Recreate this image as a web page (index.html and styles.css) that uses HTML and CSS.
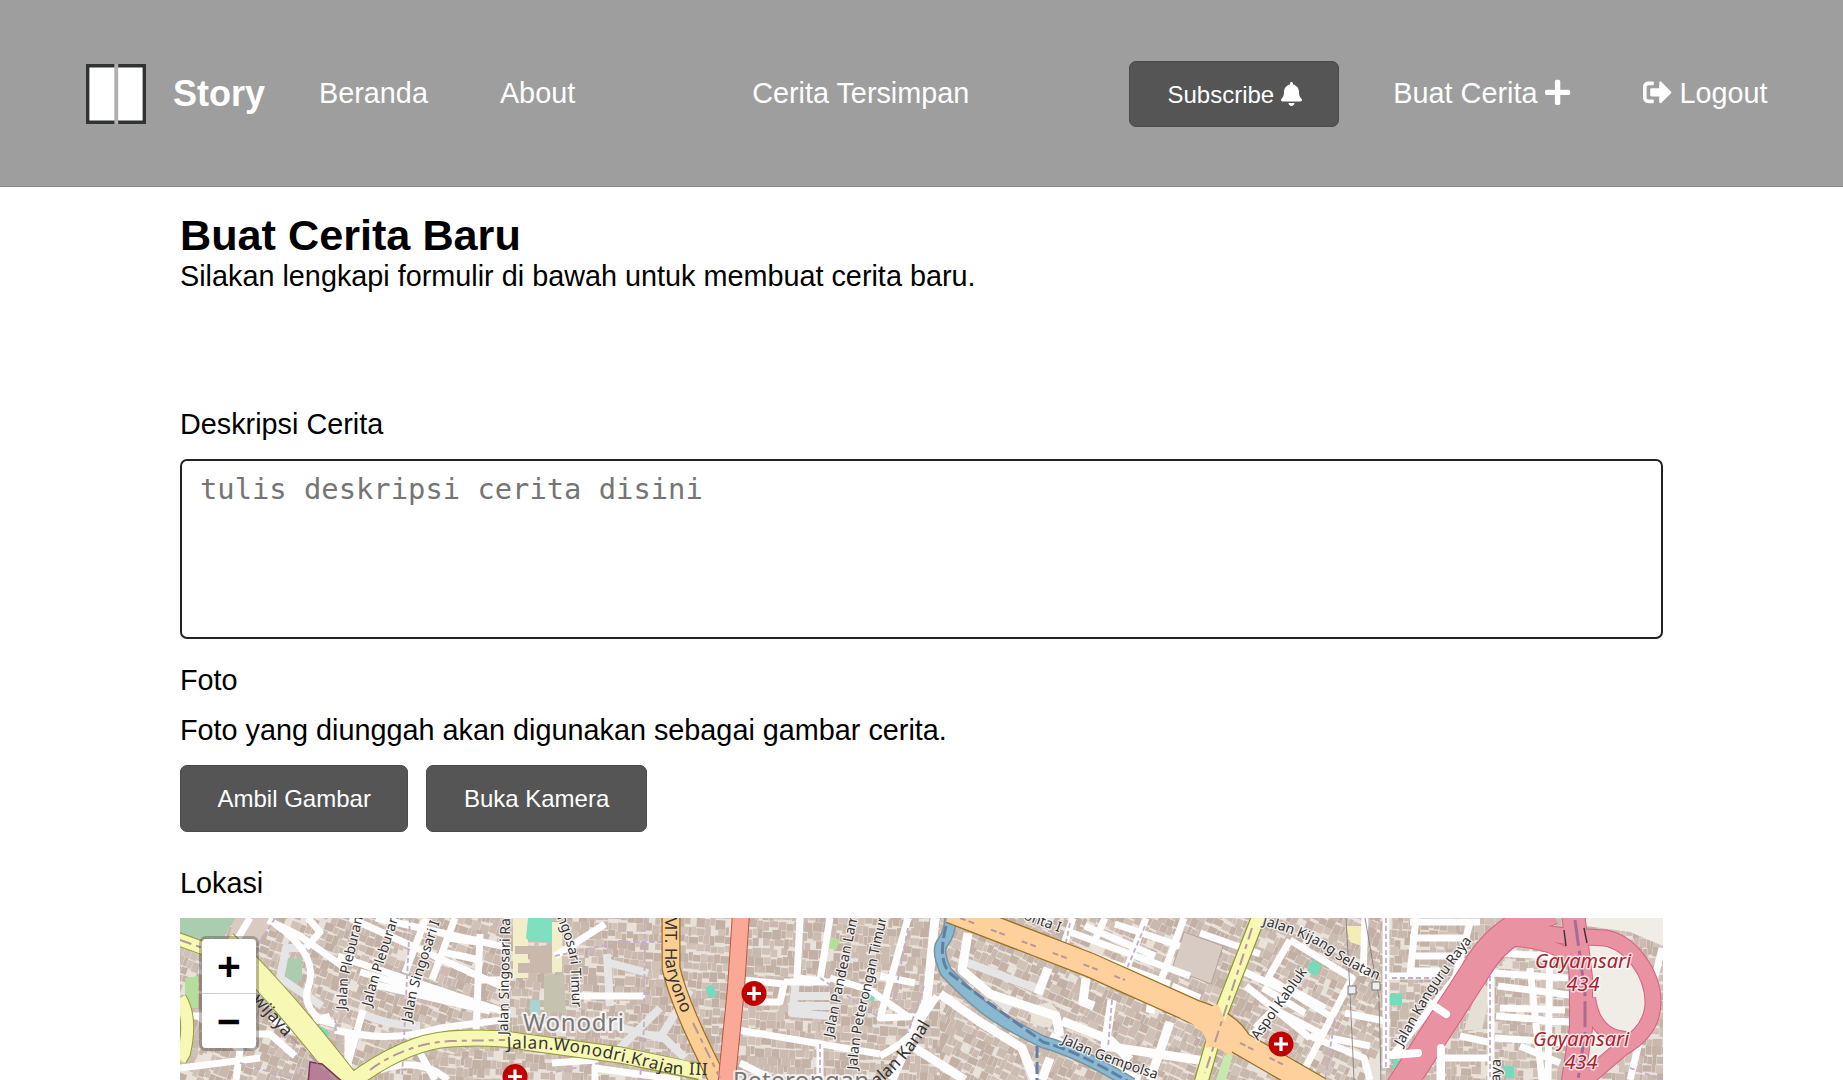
FILE: index.html
```html
<!DOCTYPE html>
<html lang="id">
<head>
<meta charset="utf-8">
<title>Story - Buat Cerita</title>
<link rel="stylesheet" href="styles.css">
</head>
<body>
<header class="header">
  <a class="brand">
    <svg class="brand-logo" viewBox="0 0 60 60">
      <path d="M28.5 1.7H1.7V58.3H28.5M31.5 1.7H58.3V58.3H31.5" fill="#fff" stroke="#303332" stroke-width="3.4"/>
      <path d="M30.500 0V60" stroke="#b0b0b0" stroke-width="3.4"/>
    </svg>
    <span class="brand-name">Story</span>
  </a>
  <nav class="nav">
    <a class="link-home">Beranda</a>
    <a class="link-about">About</a>
    <a class="link-saved">Cerita Tersimpan</a>
  </nav>
  <div class="actions">
    <button class="btn">Subscribe <svg class="icon" viewBox="0 0 448 512"><path d="M224 512c35.32 0 63.97-28.65 63.97-64H160.03c0 35.35 28.65 64 63.97 64zm215.39-149.71c-19.32-20.76-55.47-51.99-55.47-154.29 0-77.7-54.48-139.9-127.94-155.16V32c0-17.67-14.32-32-31.98-32s-31.98 14.33-31.98 32v20.84C118.56 68.1 64.08 130.3 64.08 208c0 102.3-36.15 133.53-55.47 154.29-6 6.45-8.66 14.16-8.61 21.71.11 16.4 12.98 32 32.1 32h383.8c19.12 0 32-15.6 32.1-32 .05-7.55-2.61-15.27-8.61-21.71z"/></svg></button>
    <a class="link-new">Buat Cerita <svg class="icon" viewBox="0 0 448 512"><path d="M416 208H272V64c0-17.67-14.33-32-32-32h-32c-17.67 0-32 14.33-32 32v144H32c-17.67 0-32 14.33-32 32v32c0 17.67 14.33 32 32 32h144v144c0 17.67 14.33 32 32 32h32c17.67 0 32-14.33 32-32V304h144c17.67 0 32-14.33 32-32v-32c0-17.67-14.33-32-32-32z"/></svg></a>
    <a class="link-logout"><svg class="icon" viewBox="0 0 512 512"><path d="M497 273L329 441c-15 15-41 4.5-41-17v-96H152c-13.3 0-24-10.7-24-24v-96c0-13.3 10.7-24 24-24h136V88c0-21.4 25.9-32 41-17l168 168c9.3 9.4 9.3 24.6 0 34zM192 436v-40c0-6.6-5.4-12-12-12H96c-17.7 0-32-14.3-32-32V160c0-17.7 14.3-32 32-32h84c6.6 0 12-5.4 12-12V76c0-6.6-5.4-12-12-12H96c-53 0-96 43-96 96v192c0 53 43 96 96 96h84c6.6 0 12-5.4 12-12z"/></svg> Logout</a>
  </div>
</header>
<main class="content">
  <h1 class="title">Buat Cerita Baru</h1>
  <p class="intro">Silakan lengkapi formulir di bawah untuk membuat cerita baru.</p>
  <form class="form">
    <label class="label" for="description">Deskripsi Cerita</label>
    <textarea class="description" id="description" placeholder="tulis deskripsi cerita disini"></textarea>
    <label class="label label-photo">Foto</label>
    <p class="hint">Foto yang diunggah akan digunakan sebagai gambar cerita.</p>
    <div class="buttons">
      <button type="button" class="btn">Ambil Gambar</button>
      <button type="button" class="btn">Buka Kamera</button>
    </div>
    <label class="label label-location">Lokasi</label>
    <div class="map">
      <svg class="map-canvas" viewBox="0 0 1483 162" width="1483" height="162">
        <defs>
          <clipPath id="west"><path d="M0 0H330V120L180 162H0Z"/></clipPath>
          <clipPath id="mid"><path d="M330 0H760V162H180L330 120Z"/></clipPath>
          <clipPath id="east"><path d="M760 0H1200V162H760Z"/></clipPath>
          <clipPath id="far"><path d="M1200 0H1483V162H1200Z"/></clipPath>
          <path id="t1" d="M166 92L168 62L190 -30"/>
          <path id="t2" d="M191 89L196 70L230 -36"/>
          <path id="t3" d="M231 105L237 74L273 -36"/>
          <path id="t4" d="M328 117L331 -42"/>
          <path id="t5" d="M377 -1Q390 32 391 50L393 120"/>
          <path id="t6" d="M485 -3V42Q488 68 513 120"/>
          <path id="t7" d="M327 131Q368 129 410 137T493 156L550 158"/>
          <path id="t8" d="M653 120L663 70L684 -32"/>
          <path id="t9" d="M677 152Q680 110 690 75L714 -32"/>
          <path id="t10" d="M693 172Q735 140 757 93"/>
          <path id="t11" d="M843 1L895 20"/>
          <path id="t12" d="M881 125Q920 144 1010 172"/>
          <path id="t13" d="M1078 123L1135 43"/>
          <path id="t14" d="M1082 7Q1130 20 1150 36T1215 69"/>
          <path id="t15" d="M1222 129L1255 72L1306 4"/>
          <path id="t16" d="M72 82L130 148"/>
        </defs>
        <rect width="1483" height="162" fill="#e9e2db"/>
        <g clip-path="url(#west)"><g class="lots" data-x="-40" data-y="-100" data-w="430" data-h="330" data-angle="20"></g></g>
        <g clip-path="url(#mid)"><g class="lots" data-x="180" data-y="-30" data-w="620" data-h="230" data-angle="3"></g></g>
        <g clip-path="url(#east)"><g class="lots" data-x="740" data-y="-220" data-w="480" data-h="480" data-angle="24"></g></g>
        <g clip-path="url(#far)"><g class="lots" data-x="1190" data-y="-30" data-w="310" data-h="220" data-angle="2"></g></g>

        <!-- parks, fields and landmark buildings -->
        <g>
          <path d="M0 0H55L43 20H0Z" fill="#aacdb0"/>
          <path d="M55 0H95L75 28L48 20Z" fill="#d9cbc1"/>
          <path d="M106 40H122V60L112 70L104 55Z" fill="#aacdb0"/>
          <path d="M5 60L18 58V90H5Z" fill="#b5dd9c"/>
          <path d="M140 108L150 115L146 120L138 113Z" fill="#74dcba"/>
          <path d="M333 0H348V60H333ZM372 4H382V54H372Z" fill="#f3eeca"/>
          <path d="M348 0H372V24H350L346 20Z" fill="#7fe0bf"/>
          <path d="M364 58L384 56L386 96L364 93Z" fill="#c5c2b0"/>
          <path d="M350 82H360V97H350Z" fill="#aad3d1"/>
          <path d="M335 28H372V55H338V45H350V36H335Z" fill="#cab8ad"/>
          <path d="M525 70L533 66L537 77L529 80Z" fill="#74dcba"/>
          <path d="M649 18L660 22L656 32L648 30Z" fill="#b5dd9c"/>
          <path d="M688 74L696 72L694 83L687 82Z" fill="#74dcba"/>
          <path d="M1004 14L1043 28L1031 66L992 51Z" fill="#d7cbc4" stroke="#b8a49b"/>
          <path d="M1044 138L1054 133L1046 162H1036Z" fill="#c9e8ae"/>
          <path d="M852 88L870 84L880 95L870 110L850 105Z" fill="#e8e2d7"/>
          <path d="M1129 46L1133 42L1142 48L1136 58L1128 54Z" fill="#74dcba"/>
          <path d="M1209 76H1222V87H1209Z" fill="#74dcba"/>
          <path d="M1213 142H1226L1224 152H1213Z" fill="#74dcba"/>
          <path d="M1323 148H1334V160H1326Z" fill="#74dcba"/>
          <path d="M1166 8H1182V28L1170 24Z" fill="#f4eeb4"/>
          <path d="M1300 62L1311 72L1302 112L1284 112Z" fill="#e5e0d5"/>
        </g>

        <!-- side streets -->
        <g class="street street-minor">
          <path d="M126 30H106L100 60L142 88M183 96Q210 108 240 108M427 36L430 88M430 45L468 55M480 90L440 130M420 104L480 120L510 72M482 118L505 140M396 78V60M616 64L612 95L650 98M618 78H650M614 88H650M786 44L860 72M790 60L830 92M800 104L842 130L852 162"/>
        </g>
        <g class="street">
          <path d="M70 0L58 20M95 6Q118 22 126 38T128 70T140 102L155 106M126 30L140 14L128 0M168 118V162M90 100L110 112L150 98M0 98H30M60 116H90L115 138M18 98L60 132L56 162M80 140L0 150"/>
          <path d="M88 2L120 18L165 50M170 0L330 72M196 0L330 30M158 38L330 96M180 54L290 86M192 66L310 93M246 0L225 55M275 0L252 62M300 16L296 115M155 112Q210 126 260 110L330 101M258 108L262 125M183 92L166 152M262 34L300 42M268 20L298 24M296 62H330M240 135L255 162M200 152Q240 138 268 162"/>
          <path d="M375 38L425 6M396 78H465M372 145L415 142V162M415 150L500 162"/>
          <path d="M564 62L604 66L600 84H574M604 64H650M650 60L690 72L730 100M558 112Q630 124 700 136M560 145L590 160M620 0L617 60L645 63M650 0L640 62M728 0L700 100L745 98M700 58L735 65M640 126V162M700 138Q735 120 742 100L757 78"/>
          <path class="street-wide" d="M755 0L747 82L712 162M760 76L800 104L842 130L855 162M788 15L782 52L810 76L876 98L880 118M868 50L858 76M870 118L905 140L960 162M906 60L903 84L914 88M932 82L925 128L1025 143M975 60L970 95M882 103L930 122L950 142M990 104L970 162M735 130L785 162M870 140L862 162"/>
          <path d="M893 0L882 32M925 0L915 22M966 0L945 55M1004 0L980 65M890 14L1010 58M905 8L975 38M880 26L990 66M935 6L1000 28M992 68L1020 80M1020 15L1080 36M1060 52L1110 75L1075 110M1100 85L1068 122M1066 68L1130 120M1110 22L1172 60L1120 160M1110 22L1088 60L1150 98M1092 90L1140 115M1105 68L1145 90M1130 118L1184 140L1190 162M1165 95L1210 104M1150 120L1190 128M1083 70L1125 95"/>
          <path d="M1206 0V150M1206 58H1260M1236 0L1230 56M1230 4H1300M1230 20H1290M1230 38H1278M1230 53H1260M1290 5L1275 60L1212 138M1248 84L1265 96M1210 137L1237 135M1260 132V162M1256 140H1310M1280 118L1308 124M1311 50V162M1314 55L1388 60M1316 35L1370 38M1318 68L1390 77M1316 98L1390 104M1315 120L1395 125M1370 18L1368 162M1350 50L1362 162M1320 90L1385 92M1340 128L1380 145M1440 0L1483 18M1482 30L1450 162M1240 140L1240 162M1185 0L1183 58"/>
        </g>
        <g class="lane"><path d="M155 100L160 162M465 0L464 110L460 162M375 38L440 24H490M890 5L884 34M965 8L945 55M932 82L928 130M744 68L728 115M1206 0V150M1310 50V162M1212 60H1270M1155 100L1145 162M95 0L80 25M230 0L222 160M640 126V162M728 10L714 82M60 145L110 160L140 142M640 60L700 100M1450 150L1483 162M420 145L370 155"/></g>
        <path d="M1166 0Q1170 70 1174 162M1185 0L1199 80L1201 162" fill="none" stroke="#777" stroke-width=".8"/>
        <g fill="#eee" stroke="#777"><path d="M1168 68h8v8h-8zM1192 64h8v8h-8z"/></g>

        <!-- canal -->
        <path d="M771 -4Q770 16 763 24T766 54Q795 84 813 96T863 124Q900 134 952 166" fill="none" stroke="#7b939e" stroke-width="13"/>
        <path d="M771 -4Q770 16 763 24T766 54Q795 84 813 96T863 124Q900 134 952 166" fill="none" stroke="#88b9d0" stroke-width="10"/>
        <path d="M766 8Q757 44 771 56T863 124Q900 134 952 166M857 128V162" fill="none" stroke="#5f7fa6" stroke-width="3" stroke-dasharray="12 4"/>

        <!-- main roads: casing, fill, centre line -->
        <g fill="none" stroke="#939a35">
          <path stroke-width="14" d="M-5 20L45 38M0 80Q12 100 4 135L0 142"/>
          <path stroke-width="24" d="M45 24Q95 70 165 160L175 170"/>
          <path stroke-width="17" d="M170 165Q225 124 270 121T345 124L440 137L520 154"/>
          <path stroke-width="15" d="M1080 -5L1041 95L1020 168"/>
        </g>
        <g fill="none" stroke="#f7f8b4">
          <path stroke-width="12" d="M-5 20L45 38M0 80Q12 100 4 135L0 142"/>
          <path stroke-width="22" d="M45 24Q95 70 165 160L175 170"/>
          <path stroke-width="15" d="M170 165Q225 124 270 121T345 124L440 137L523 154"/>
        </g>
        <path d="M130 144L142 146L165 166H128Z" fill="#b67f98" stroke="#7c3654" stroke-width="1.5"/>
        <path d="M491 -5V50Q500 90 542 170" fill="none" stroke="#9b701e" stroke-width="19"/>
        <path d="M491 -5V50Q500 90 542 170" fill="none" stroke="#fbcf94" stroke-width="16.500"/>
        <path d="M561 -5L556 70L546 170" fill="none" stroke="#bd5444" stroke-width="18"/>
        <path d="M561 -5L556 70L546 170" fill="none" stroke="#f9a996" stroke-width="16"/>
        <path d="M770 -7L910 47L1015 94Q1050 105 1060 125L1140 171" fill="none" stroke="#9b701e" stroke-width="25"/>
        <path d="M770 -7L910 47L1015 94Q1050 105 1060 125L1140 171" fill="none" stroke="#fdd09c" stroke-width="22.500"/>
        <path stroke="#f7f8b4" stroke-width="12.500" fill="none" d="M1080 -5L1041 95L1020 168"/>
        <path d="M1012 82Q1030 92 1038 86L1046 105Q1052 115 1060 118L1050 138Q1034 126 1026 130Q1030 112 1000 100Z" fill="#fdd09c"/>
        <g fill="none" stroke="#b59898" stroke-width="2" stroke-dasharray="12 5 5 5">
          <path d="M0 22L40 36M110 118L160 166M190 152Q225 126 270 123L325 122M1072 10L1025 155M513 105L540 160"/>
          <path stroke-dasharray="6 3 6 18" d="M780 0L945 62M1060 125L1110 150"/>
        </g>

        <!-- toll road and its interchange loop -->
        <path d="M1406 20H1435Q1470 40 1472 80Q1462 118 1405 166L1412 112Z" fill="#efede6"/>
        <path d="M1405 0H1483V28L1450 14L1406 8Z" fill="#efede6"/>
        <g fill="none" stroke="#d95f83">
          <path stroke-width="30" d="M1220 170L1296 52Q1318 12 1372 -8"/>
          <path stroke-width="17" d="M1320 22Q1350 12 1385 18L1425 20C1450 24 1473 55 1473 84C1473 105 1460 120 1442 130L1398 168"/>
          <path stroke-width="24" d="M1393 -5L1401 60V110L1392 170"/>
          <path stroke-width="14" d="M1320 22Q1360 20 1390 38M1409 80Q1414 118 1446 120"/>
        </g>
        <g fill="none" stroke="#e892a2">
          <path stroke-width="28" d="M1220 170L1296 52Q1318 12 1372 -8"/>
          <path stroke-width="15" d="M1320 22Q1350 12 1385 18L1425 20C1450 24 1473 55 1473 84C1473 105 1460 120 1442 130L1398 168"/>
          <path stroke-width="22" d="M1393 -5L1401 60V110L1392 170"/>
          <path stroke-width="12" d="M1320 22Q1360 20 1390 38M1409 80Q1414 118 1446 120"/>
        </g>
        <path d="M1395 2L1405 75V115L1398 162" fill="none" stroke="#a66c96" stroke-width="3" stroke-dasharray="26 5 5 5"/>
        <path d="M1384 12L1386 28M1404 10L1407 25" stroke="#333" stroke-width="1.4"/>
        <path d="M1248 84L1266 96M1212 137L1238 135M1261 130V162" fill="none" stroke="#fff" stroke-width="8" stroke-linecap="round"/>

        <!-- place and street names -->
        <g class="street-name">
          <text><textPath href="#t1">Jalan Pleburan</textPath></text>
          <text><textPath href="#t2">Jalan Pleburan</textPath></text>
          <text><textPath href="#t3">Jalan Singosari I</textPath></text>
          <text><textPath href="#t4">Jalan Singosari Ra</textPath></text>
          <text><textPath href="#t5">ngosari Timur</textPath></text>
          <text><textPath href="#t8">Jalan Pandean Lam</textPath></text>
          <text><textPath href="#t9">Jalan Peterongan Timur</textPath></text>
          <text><textPath href="#t11">onta I</textPath></text>
          <text><textPath href="#t12">Jalan Gempolsa</textPath></text>
          <text><textPath href="#t13">Aspol Kabluk</textPath></text>
          <text><textPath href="#t14">Jalan Kijang Selatan</textPath></text>
          <text><textPath href="#t15">Jalan Kanguru Raya</textPath></text>
          <text transform="translate(1320 164) rotate(-88)">aya</text>
        </g>
        <g class="road-name">
          <text><textPath href="#t6">MT. Haryono</textPath></text>
          <text><textPath href="#t7" textLength="203">Jalan.Wonodri.Krajan III</textPath></text>
          <text><textPath href="#t10">Jalan Kanal</textPath></text>
          <text><textPath href="#t16">wijaya</textPath></text>
        </g>
        <g class="place-name">
          <text x="343" y="113" textLength="101">Wonodri</text>
          <text x="553" y="171" textLength="136">Peterongan</text>
        </g>
        <g class="exit-name">
          <text x="1403" y="50">Gayamsari</text><text x="1403" y="73">434</text>
          <text x="1401" y="128">Gayamsari</text><text x="1401" y="151">434</text>
        </g>
        <g fill="#bf0000"><circle cx="574" cy="75.5" r="12.5"/><circle cx="1101" cy="126" r="12.5"/><circle cx="335" cy="158.500" r="12.5"/></g>
        <path d="M567 75.500h14m-7-7v14M1094 126h14m-7-7v14M328 158.500h14m-7-7v14" stroke="#fff" stroke-width="3.2"/>
      </svg>
      <div class="zoom">
        <a class="zoom-in">+</a>
        <a class="zoom-out">−</a>
      </div>
    </div>
  </form>
</main>
<script src="map.js"></script>
</body>
</html>
```
FILE: styles.css
```css
* { box-sizing: border-box; margin: 0; padding: 0; }
body { background: #fff; color: #000; font: 28.8px/33px "Liberation Sans", Arial, sans-serif; height: 1080px; overflow: hidden; }
.header { height: 187px; padding: 0 75.5px 0 86px; display: flex; align-items: center; background: #9e9e9e; border-bottom: 1px solid #8b8b8b; color: #fff; white-space: nowrap; }
.brand { display: flex; align-items: center; gap: 27px; }
.brand-logo { width: 60px; height: 60px; margin-top: 2px; }
.brand-name { font-size: 36px; font-weight: bold; line-height: 42px; padding-top: 2px; }
.nav { display: flex; margin-left: 54px; }
.link-about { margin-left: 72px; }
.link-saved { margin-left: 177px; }
.actions { display: flex; align-items: center; margin-left: auto; }
.link-new { margin-left: 54px; }
.link-logout { margin-left: 72px; }
.icon { height: 1em; width: auto; display: inline-block; vertical-align: -.155em; fill: currentColor; overflow: visible; }
.btn { height: 66.500px; padding: 0 36.500px; border: 1px solid #4a4a4a; border-radius: 7px; background: #555; color: #fff; font: 24px/27px "Liberation Sans", Arial, sans-serif; }
.actions .btn { margin-top: 2px; padding: 0 36.500px 0 37px; }
.content { width: 1483px; margin: 0 auto; padding-top: 24px; }
.title { font-size: 43.2px; line-height: 49px; }
.form { display: flex; flex-direction: column; margin-top: 115px; }
.description { height: 180px; margin-top: 18px; padding: 11px 18px; border: 2px solid #222; border-radius: 7px; resize: none; font: 28.8px/34px "DejaVu Sans Mono", monospace; }
.description::placeholder { color: #757575; }
.label-photo { margin-top: 24.500px; }
.hint { margin-top: 17.500px; }
.buttons { display: flex; gap: 18px; margin-top: 18px; }
.label-location { margin-top: 35px; }
.map { position: relative; height: 162px; margin-top: 18px; overflow: hidden; background: #ddd; }
.map-canvas { display: block; }
.zoom { position: absolute; left: 19px; top: 18px; width: 60px; border: 3px solid rgba(0, 0, 0, .25); border-radius: 7px; background-clip: padding-box; }
.zoom-in, .zoom-out { display: block; height: 54px; background: #fff; text-align: center; font: bold 38px/54px "DejaVu Sans Mono", monospace; }
.zoom-in { border-bottom: 1px solid #ccc; border-radius: 4px 4px 0 0; height: 55px; }
.zoom-out { border-radius: 0 0 4px 4px; }
.street { fill: none; stroke: #fdfdfd; stroke-width: 7; stroke-linejoin: round; }
.street-minor { stroke: #e6e5e5; stroke-width: 8; }
.street-wide { stroke-width: 9; }
.lane { fill: none; stroke: #c5aec9; stroke-width: 1.8; stroke-dasharray: 5 3; }
.street-name, .road-name, .place-name, .exit-name { font-family: "Noto Sans", sans-serif; paint-order: stroke; stroke-linejoin: round; }
.street-name { font-size: 14px; fill: #333; stroke: rgba(255, 255, 255, .75); stroke-width: 2.500px; }
.road-name { font-size: 17px; fill: #333; }
.place-name { font-size: 24px; fill: #777; stroke: rgba(255, 255, 255, .75); stroke-width: 4px; }
.exit-name { font-size: 20px; font-style: italic; text-anchor: middle; fill: #a8232f; stroke: rgba(255, 255, 255, .75); stroke-width: 3px; }
```
FILE: map.js
```js
// Fills each district of the map with small building lots.
let seed = 7;
const random = () => (seed = (seed * 16807) % 2147483647) / 2147483647;
const colors = ['#c4b2a7', '#cbbbb0', '#c2b0a5', '#d1c2b8', '#c9b8ad'];

document.querySelectorAll('.lots').forEach((group) => {
  const { x, y, w, h, angle } = group.dataset;
  const x0 = +x, y0 = +y, x1 = x0 + +w, y1 = y0 + +h;
  group.setAttribute('transform', `rotate(${angle} ${(x0 + x1) / 2} ${(y0 + y1) / 2})`);
  for (let row = y0; row < y1; row += 9) {
    for (let col = x0; col < x1;) {
      const width = 3 + random() * 7;
      if (random() > 0.05) {
        const lot = document.createElementNS('http://www.w3.org/2000/svg', 'rect');
        lot.setAttribute('x', col.toFixed(1));
        lot.setAttribute('y', (row + random() * 3).toFixed(1));
        lot.setAttribute('width', width.toFixed(1));
        lot.setAttribute('height', (6 + random() * 4).toFixed(1));
        lot.setAttribute('fill', colors[Math.floor(random() * colors.length)]);
        group.appendChild(lot);
      }
      col += width + 0.4;
    }
  }
});
```
